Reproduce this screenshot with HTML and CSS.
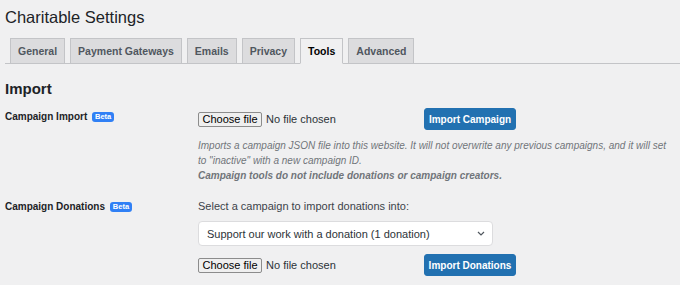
FILE: index.html
```html
<!DOCTYPE html>
<html lang="en">

<head>
    <meta charset="UTF-8">
    <meta name="viewport" content="width=device-width, initial-scale=1.0">
    <title>Charitable Settings</title>
    <link rel="stylesheet" href="styles.css">
</head>

<body>
    <div class="wrap">
        <h1 class="title">Charitable Settings</h1>
        <nav class="tabs">
            <a class="tab">General</a>
            <a class="tab">Payment Gateways</a>
            <a class="tab">Emails</a>
            <a class="tab">Privacy</a>
            <a class="tab active">Tools</a>
            <a class="tab">Advanced</a>
        </nav>

        <h2 class="section">Import</h2>

        <div class="row first">
            <div class="label">Campaign Import <span class="beta">Beta</span></div>
            <div class="field">
                <div class="actions">
                    <div class="file">
                        <button class="choose">Choose file</button>
                        <span>No file chosen</span>
                    </div>
                    <button class="primary">Import Campaign</button>
                </div>
                <p class="desc">
                    Imports a campaign JSON file into this website. It will not overwrite any previous campaigns, and it will set to "inactive" with a new campaign ID.<br>
                    <strong>Campaign tools do not include donations or campaign creators.</strong>
                </p>
            </div>
        </div>

        <div class="row">
            <div class="label">Campaign Donations <span class="beta">Beta</span></div>
            <div class="field">
                <div class="intro">Select a campaign to import donations into:</div>
                <div class="select">
                    <span>Support our work with a donation (1 donation)</span>
                    <svg width="8" height="5" viewBox="0 0 8 5"><polyline points="1,1 4,4 7,1" fill="none" stroke="#50575e" stroke-width="1.2"/></svg>
                </div>
                <div class="actions">
                    <div class="file">
                        <button class="choose">Choose file</button>
                        <span>No file chosen</span>
                    </div>
                    <button class="primary">Import Donations</button>
                </div>
            </div>
        </div>
    </div>
</body>

</html>
```

FILE: styles.css
```css
body {
    margin: 0;
    background-color: #f0f0f1;
    color: #1d2327;
    font-family: "Liberation Sans", Arial, sans-serif;
}
.wrap {
    padding: 7px 0 0 5px;
}
.title {
    margin: 0;
    font-size: 16.5px;
    font-weight: 400;
    line-height: 20px;
}
.tabs {
    display: flex;
    align-items: flex-end;
    height: 25px;
    margin-top: 11px;
    border-bottom: 1px solid #c3c4c7;
}
.tab {
    margin: 0 0 -1px 5px;
    padding: 0 7px;
    line-height: 24px;
    border: 1px solid #c3c4c7;
    background-color: #dcdcde;
    color: #50575e;
    font-size: 10.5px;
    font-weight: bold;
}
.tab.active {
    background-color: #f0f0f1;
    border-bottom-color: #f0f0f1;
    color: #000;
}
.section {
    margin: 16px 0 0;
    font-size: 15px;
    line-height: 18px;
}
.row {
    display: grid;
    grid-template-columns: 193px 1fr;
    padding-top: 16px;
}
.row.first {
    padding-top: 10px;
}
.label {
    font-size: 10px;
    font-weight: bold;
    line-height: 15px;
}
.first .label {
    padding-top: 1px;
}
.beta {
    display: inline-block;
    margin-left: 2px;
    padding: 0 3px;
    height: 10px;
    line-height: 10px;
    border-radius: 3px;
    background-color: #3080f5;
    color: white;
    font-size: 7.5px;
    vertical-align: 1px;
}
.actions {
    display: flex;
    align-items: center;
}
.file {
    display: flex;
    align-items: center;
    gap: 4px;
    width: 226px;
    font-size: 11px;
    color: #2c3338;
}
.choose {
    height: 15px;
    padding: 0 3.5px;
    border: 1px solid #8c8c8c;
    border-radius: 2px;
    background-color: #efefef;
    color: #000;
    font-family: inherit;
    font-size: 11px;
    line-height: 13px;
}
.primary {
    width: 92px;
    height: 22px;
    padding: 0;
    border: 1px solid #2271b1;
    border-radius: 3px;
    background-color: #2271b1;
    color: white;
    font-family: inherit;
    font-size: 10px;
    font-weight: bold;
}
.desc {
    max-width: 476px;
    margin: 8px 0 0;
    color: #70757a;
    font-size: 10px;
    font-style: italic;
    line-height: 15px;
}
.intro {
    color: #3c434a;
    font-size: 11px;
    line-height: 15px;
}
.select {
    display: flex;
    align-items: center;
    justify-content: space-between;
    box-sizing: border-box;
    width: 295px;
    height: 25px;
    margin-top: 7px;
    padding: 0 7px 0 8px;
    border: 1px solid #dcdcde;
    border-radius: 4px;
    background-color: white;
    color: #2c3338;
    font-size: 11px;
}
.select + .actions {
    margin-top: 8px;
}
```
